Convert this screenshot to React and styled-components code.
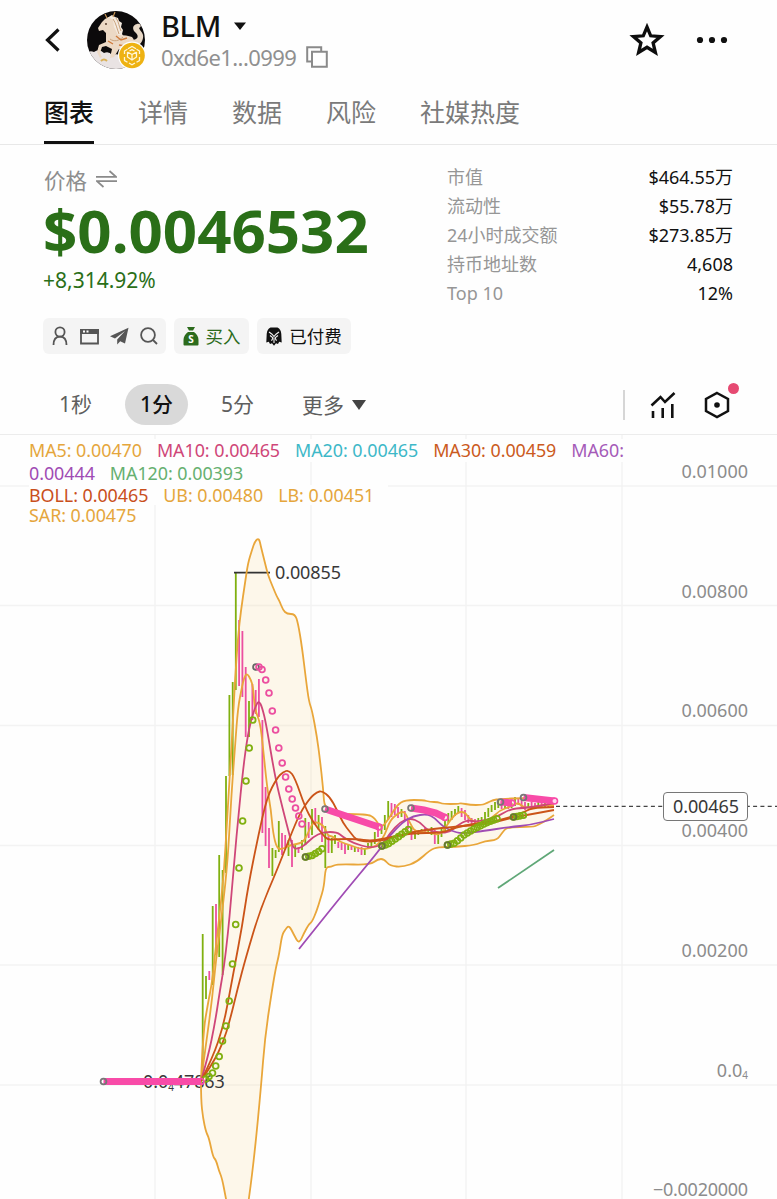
import { useState } from "react";
import styled, { createGlobalStyle } from "styled-components";

const UP = "#80b010";
const DOWN = "#ec4fa0";
const PINK = "#f84ba8";
const ORANGE = "#e9a63a";
const MAGENTA = "#cf4678";
const RED = "#cb5418";
const PURPLE = "#a04cb4";
const GREEN = "#5fa777";

const TABS = ["图表", "详情", "数据", "风险", "社媒热度"];

const STATS = [
  { label: "市值", value: "$464.55万" },
  { label: "流动性", value: "$55.78万" },
  { label: "24小时成交额", value: "$273.85万" },
  { label: "持币地址数", value: "4,608" },
  { label: "Top 10", value: "12%" },
];

const LEGEND = [
  [
    { text: "MA5: 0.00470", color: "#e5a63c" },
    { text: "MA10: 0.00465", color: "#cf4678" },
    { text: "MA20: 0.00465", color: "#3db8c8" },
    { text: "MA30: 0.00459", color: "#cb5a20" },
    { text: "MA60:", color: "#a55bb8" },
  ],
  [
    { text: "0.00444", color: "#a04cb4" },
    { text: "MA120: 0.00393", color: "#66b070" },
  ],
  [
    { text: "BOLL: 0.00465", color: "#c94f1c" },
    { text: "UB: 0.00480", color: "#e5a63c" },
    { text: "LB: 0.00451", color: "#e5a63c" },
  ],
  [{ text: "SAR: 0.00475", color: "#e5a63c" }],
];

const UPPER = [
  [201, 1081], [203, 1033], [208, 1003], [212, 983], [216, 945], [219, 920],
  [224, 873], [227, 820], [230, 773], [233, 720], [235, 680], [238, 637],
  [241, 610], [245, 583], [248, 563], [252, 550], [255, 541], [259, 538],
  [261, 547], [265, 563], [268, 575], [272, 585], [277, 597], [279, 600],
  [283, 610], [287, 614], [295, 614], [298, 623], [302, 647], [306, 680],
  [309, 702], [312, 710], [317, 737], [320, 760], [323, 787], [325, 814],
  [367, 814], [375, 818], [381, 829], [390, 817], [397, 805], [405, 800],
  [423, 800], [430, 802], [438, 802], [443, 804], [458, 804], [461, 803],
  [470, 805], [482, 805], [487, 803], [493, 800], [500, 799], [523, 798],
  [543, 799], [554, 801],
];

const LOWER = [
  [201, 1081], [201, 1100], [203, 1118], [206, 1132], [209, 1138], [213, 1157],
  [216, 1160], [219, 1171], [222, 1178], [226, 1199], [232, 1230], [244, 1230],
  [249, 1199], [255, 1150], [261, 1087], [265, 1037], [272, 990], [276, 967],
  [279, 955], [282, 935], [285, 930], [289, 925], [294, 935], [299, 944],
  [304, 933], [309, 924], [312, 922], [317, 910], [320, 900], [324, 887],
  [325.5, 867], [331, 867], [337, 864], [370, 865], [378, 859], [384, 859],
  [390, 866], [403, 867], [417, 862], [430, 850], [438, 847], [455, 847],
  [475, 845], [485, 841], [497, 840], [502, 833], [507, 827], [533, 827],
  [538, 825], [547, 820], [554, 815],
];

const MA5 = [
  [201, 1081], [207, 1037], [212, 1000], [216, 960], [220, 930], [227, 870],
  [230, 820], [232, 787], [235, 747], [238, 707], [242, 687], [244, 678],
  [247, 673], [251, 680], [253, 687], [254, 700], [256, 713], [260, 722],
  [263, 747], [267, 787], [271, 810], [273, 833], [277, 849], [283, 849],
  [290, 845], [303, 843], [308, 833], [313, 822], [320, 823], [325, 828],
  [328, 836], [332, 836], [340, 842], [350, 845], [363, 850], [377, 846],
  [385, 835], [390, 820], [400, 812], [405, 812], [410, 823], [415, 832],
  [428, 832], [437, 835], [443, 832], [450, 820], [458, 812], [465, 812],
  [470, 820], [480, 823], [490, 820], [500, 810], [510, 807], [518, 802],
  [525, 809], [543, 805], [554, 805],
];

const MA10 = [
  [201, 1081], [208, 1057], [215, 1023], [220, 990], [224, 967], [228, 933],
  [231, 900], [235, 853], [238, 820], [243, 770], [247, 740], [251, 720],
  [256, 705], [259, 701], [262, 707], [266, 723], [275, 777], [283, 810],
  [290, 837], [293, 848], [298, 849], [305, 845], [313, 837], [323, 832],
  [337, 832], [343, 837], [353, 843], [370, 848], [382, 845], [390, 833],
  [400, 822], [410, 818], [420, 822], [427, 830], [440, 833], [450, 832],
  [458, 825], [467, 820], [477, 822], [497, 817], [510, 809], [523, 808],
  [540, 806], [554, 803],
];

const MA20 = [
  [201, 1081], [213, 1057], [223, 1027], [229, 997], [235, 964], [242, 927],
  [248, 887], [258, 837], [267, 797], [277, 778], [283, 772], [289, 770],
  [295, 778], [305, 807], [313, 822], [323, 835], [328, 840], [337, 839],
  [357, 839], [370, 841], [383, 839], [410, 833], [443, 833], [453, 828],
  [477, 823], [497, 821], [523, 813], [531, 808], [554, 807],
];

const MA30 = [
  [201, 1081], [213, 1063], [223, 1043], [230, 1020], [238, 987], [246, 957],
  [260, 910], [277, 870], [290, 837], [300, 813], [310, 798], [317, 792],
  [322, 791], [330, 797], [337, 810], [343, 823], [350, 832], [358, 842],
  [382, 841], [397, 836], [417, 831], [450, 827], [490, 824], [510, 818],
  [527, 815], [554, 810],
];

const MA60 = [
  [299, 949], [338, 900], [378, 852], [390, 835], [403, 822], [413, 816],
  [427, 814], [435, 818], [443, 827], [457, 833], [467, 833], [483, 831],
  [510, 827], [530, 825], [554, 819],
];

const MA120 = [[498, 888], [554, 850]];

// x, top, bottom, 1 = up
const CANDLES = [
  [202.7, 934, 1080, 1], [206, 976, 999, 1], [209.3, 971, 980, 0],
  [212.7, 906, 985, 1], [216, 904, 955, 0], [219.2, 855, 957, 1],
  [222.6, 870, 975, 1], [226, 776, 873, 1], [229.4, 695, 776, 1],
  [232.7, 682, 775, 1], [235.8, 573, 690, 1], [239.1, 620, 686, 0],
  [242.4, 631, 697, 0], [245.7, 667, 737, 0], [249, 701, 737, 1],
  [252.4, 684, 720, 0], [255.7, 690, 714, 0], [258.9, 679, 717, 0],
  [262.4, 720, 833, 0], [265.6, 787, 846, 0], [269, 828, 868, 0],
  [272.4, 848, 876, 1], [275.6, 850, 858, 1], [278.8, 821, 852, 1],
  [282, 833, 855, 0], [285.2, 835, 850, 0], [288.5, 840, 856, 1],
  [292, 840, 867, 0], [295.2, 845, 857, 1], [298.5, 847, 853, 0],
  [302, 840, 850, 1], [305.3, 818, 845, 1], [308.7, 822, 838, 0],
  [312, 809, 835, 1], [315.3, 808, 825, 0], [318.6, 815, 830, 1],
  [322, 817, 842, 0], [325.3, 826, 868, 1], [328.5, 835, 853, 0],
  [331.8, 838, 853, 1], [335, 835, 844, 1], [338.3, 842, 848, 0],
  [341.6, 843, 850, 0], [345, 844, 854, 0], [348.2, 845, 850, 1],
  [351.5, 846, 850, 0], [354.8, 847, 852, 1], [358.2, 847, 852, 0],
  [361.5, 847, 855, 0], [364.8, 848, 855, 1], [368, 843, 849, 1],
  [371.4, 840, 847, 1], [374.8, 832, 844, 1], [378, 828, 837, 0],
  [381.5, 824, 834, 1], [384.8, 815, 830, 1], [388.2, 801, 820, 1],
  [391.5, 803, 817, 0], [394.8, 804, 815, 0], [398, 807, 818, 0],
  [401.5, 809, 817, 1], [404.8, 811, 820, 0], [408, 818, 829, 0],
  [411.5, 828, 840, 0], [415, 831, 839, 1], [418.3, 830, 835, 1],
  [421.6, 829, 834, 1], [425, 828, 833, 0], [428.2, 829, 834, 1],
  [431.5, 827, 835, 1], [434.8, 830, 844, 0], [438.2, 833, 844, 1],
  [441.5, 829, 837, 1], [445, 820, 832, 1], [448.3, 813, 823, 1],
  [451.6, 811, 820, 1], [455, 809, 816, 1], [458.3, 806, 813, 1],
  [461.6, 808, 817, 0], [465, 810, 820, 0], [468.3, 815, 823, 0],
  [471.6, 818, 825, 0], [475, 819, 826, 0], [478.3, 818, 823, 1],
  [481.6, 817, 822, 1], [485, 812, 820, 1], [488.3, 808, 817, 1],
  [491.6, 805, 812, 1], [495, 802, 810, 1], [498.3, 800, 808, 1],
  [501.6, 801, 809, 0], [505, 800, 808, 1], [508.3, 802, 809, 0],
  [511.6, 803, 808, 1], [515, 797, 806, 1], [518.3, 798, 805, 0],
  [521.6, 800, 808, 0], [525, 802, 810, 0], [528.3, 803, 808, 1],
  [531.6, 802, 809, 0], [535, 803, 808, 0], [538.3, 800, 807, 1],
  [541.6, 801, 808, 0], [545, 800, 807, 1], [548.3, 801, 807, 0],
  [551.6, 799, 806, 1],
];

const FALLING_DOTS = [
  [259, 667], [262, 669.5], [265.7, 680], [269, 693], [272.3, 711],
  [275.6, 730], [278.8, 748], [282.2, 763], [285.6, 777], [288.8, 789],
  [292.2, 799], [295.5, 808], [298.8, 816], [302, 824],
];

const RISING_DOTS = [
  [205.7, 1079], [209, 1076.5], [212.5, 1073], [215.7, 1066], [219.2, 1056.5],
  [222.5, 1041], [226, 1026], [229.2, 1001], [232.5, 964], [235.7, 924.5],
  [239, 868], [242.6, 821], [246, 781], [249.2, 748], [252.7, 720],
];

const UP_RUNS = [
  [[305.5, 857], [312, 855.5], [318, 852], [323, 848]],
  [[382, 846], [388, 844], [398, 837], [409, 829]],
  [[447.5, 845], [455, 843], [464, 835], [474, 829], [486, 823], [499, 818]],
  [[513.5, 817], [525, 815]],
];

const DOWN_RUNS = [
  [[325, 809], [379, 827]],
  [[411, 808], [424, 810], [436, 813], [445, 817.5]],
  [[500.5, 802], [512, 803]],
  [[523.5, 797.5], [554.5, 801]],
  [[103.5, 1081.5], [201, 1081.5]],
];

const GRID_Y = [486, 605.5, 725.5, 845.5, 965, 1085];
const GRID_X = [155, 311, 466, 622];

const AXIS = [
  ["0.01000", 478],
  ["0.00800", 598],
  ["0.00600", 717],
  ["0.00400", 837],
  ["0.00200", 957],
];

const toLine = (points) => points.map((p) => p.join(",")).join(" ");

// rounds the corners by running a quadratic through the midpoints
const toCurve = (points) => {
  let d = `M${points[0].join(" ")}`;
  for (let i = 1; i < points.length - 1; i++) {
    const [x, y] = points[i];
    const [nx, ny] = points[i + 1];
    d += `Q${x} ${y} ${(x + nx) / 2} ${(y + ny) / 2}`;
  }
  return d + `L${points[points.length - 1].join(" ")}`;
};

const spread = (points, step = 3.3) => {
  const dots = [];
  let carry = 0;
  for (let i = 1; i < points.length; i++) {
    const [x1, y1] = points[i - 1];
    const [x2, y2] = points[i];
    let x = x1 + carry;
    while (x <= x2) {
      dots.push([x, y1 + ((y2 - y1) * (x - x1)) / (x2 - x1)]);
      x += step;
    }
    carry = x - x2;
  }
  return dots;
};

const Dots = ({ points, color }) =>
  points.map(([x, y]) => (
    <circle key={x} cx={x} cy={y} r="2.9" fill="none" stroke={color} strokeWidth="1.8" />
  ));

const PriceChart = () => (
  <ChartSvg viewBox="0 435 777 764">
    {GRID_Y.map((y) => (
      <line key={y} x1="0" x2="777" y1={y} y2={y} stroke="#f3f3f3" strokeWidth="1.4" />
    ))}
    {GRID_X.map((x) => (
      <line key={x} x1={x} x2={x} y1="435" y2="1199" stroke="#f3f3f3" strokeWidth="1.4" />
    ))}

    <polygon
      points={toLine([...UPPER, ...[...LOWER].reverse()])}
      fill="#f9d58a"
      fillOpacity="0.17"
    />

    {CANDLES.map(([x, top, bottom, up]) => (
      <rect
        key={x}
        x={x - 0.9}
        y={top}
        width="1.8"
        height={bottom - top}
        fill={up ? UP : DOWN}
      />
    ))}

    <Label x="275" y="579">0.00855</Label>
    <line x1="234" x2="270" y1="572.7" y2="572.7" stroke="#333" strokeWidth="1.8" />
    <Label x="143" y="1088">
      0.0<tspan fontSize="10" dy="3">4</tspan>
      <tspan dy="-3">47863</tspan>
    </Label>

    <Curve d={toCurve(UPPER)} stroke={ORANGE} />
    <Curve d={toCurve(LOWER)} stroke={ORANGE} />
    <Curve d={toCurve(MA5)} stroke={ORANGE} />
    <Curve d={toCurve(MA10)} stroke={MAGENTA} />
    <Curve d={toCurve(MA60)} stroke={PURPLE} />
    <Curve d={toCurve(MA30)} stroke={RED} />
    <Curve d={toCurve(MA20)} stroke={RED} />
    <Curve d={toCurve(MA120)} stroke={GREEN} />

    <Dots points={RISING_DOTS} color={UP} />
    <Dots points={[[256, 667]]} color="#666" />
    <Dots points={FALLING_DOTS} color={DOWN} />
    {UP_RUNS.map((run) => (
      <g key={run[0][0]}>
        <Dots points={spread(run)} color={UP} />
        <Dots points={[run[0]]} color="#667733" />
      </g>
    ))}
    {DOWN_RUNS.map((run) => (
      <g key={run[0][0]}>
        <polyline points={toLine(run)} fill="none" stroke={PINK} strokeWidth="7" />
        <Dots points={[run[run.length - 1]]} color={PINK} />
        <Dots points={[run[0]]} color="#777" />
      </g>
    ))}
    <circle cx="554.5" cy="801" r="2" fill="#ffd9ef" />

    <line
      x1="556"
      x2="777"
      y1="806.4"
      y2="806.4"
      stroke="#444"
      strokeWidth="1.2"
      strokeDasharray="4 3.3"
    />
    {AXIS.map(([text, y]) => (
      <AxisLabel key={text} x="748" y={y}>
        {text}
      </AxisLabel>
    ))}
    <AxisLabel x="748" y="1077">
      0.0<tspan fontSize="10" dy="2">4</tspan>
    </AxisLabel>
    <AxisLabel x="748" y="1196" textLength="95">
      −0.0020000
    </AxisLabel>
    <rect x="663.5" y="792.5" width="84" height="28" rx="3.5" fill="#fefefe" stroke="#777" />
    <Label x="673" y="812.5">0.00465</Label>
  </ChartSvg>
);

const App = () => {
  const [tab, setTab] = useState("图表");
  const [interval, setInterval] = useState("1分");

  return (
    <>
      <GlobalStyle />
      <Page>
        <Header>
          <Icon $w={16} $h={26} viewBox="0 0 16 26">
            <path d="M14.5 2.5 3.500 13l11 10.500" fill="none" stroke="#111" strokeWidth="3.2" />
          </Icon>
          <Avatar>
            <HorseAvatar />
          </Avatar>
          <Token>
            <Name>
              BLM
              <Icon $w={12} $h={8} viewBox="0 0 12 8">
                <path d="M0 .5h12L6 8z" fill="#111" />
              </Icon>
            </Name>
            <Address>
              0xd6e1...0999
              <Icon $w={22} $h={22} viewBox="0 0 22 22">
                <path
                  d="M6 15.500H1.200V1.200h14v4.300M6 5.700h14.800v15H6z"
                  fill="none"
                  stroke="#8a8a8a"
                  strokeWidth="2"
                />
              </Icon>
            </Address>
          </Token>
          <Icon $w={36} $h={36} viewBox="0 0 36 36">
            <path
              d="M18 5l3.700 8.800 9.800.8-7.400 6.300 2.300 9.600-8.400-5.200-8.400 5.200 2.300-9.600-7.400-6.300 9.800-.8z"
              fill="none"
              stroke="#0d0d0d"
              strokeWidth="3.3"
            />
          </Icon>
          <Icon $w={32} $h={8} viewBox="0 0 32 8">
            <circle cx="4" cy="4" r="3.1" fill="#111" />
            <circle cx="16" cy="4" r="3.1" fill="#111" />
            <circle cx="28" cy="4" r="3.1" fill="#111" />
          </Icon>
        </Header>

        <Tabs>
          {TABS.map((name) => (
            <Tab key={name} $active={name === tab} onClick={() => setTab(name)}>
              {name}
            </Tab>
          ))}
        </Tabs>

        <Summary>
          <PriceColumn>
            <PriceLabel>
              价格
              <Icon $w={21} $h={18} viewBox="0 0 21 18">
                <path
                  d="M0 6.8h20L13.500 1M21 11.200H1L7.500 17"
                  fill="none"
                  stroke="#8a8a8a"
                  strokeWidth="1.7"
                />
              </Icon>
            </PriceLabel>
            <Price>$0.0046532</Price>
            <Change>+8,314.92%</Change>
            <Badges>
              <Badge $width={123} $gap={11}>
                <Icon $w={18} $h={20} viewBox="0 0 18 20">
                  <circle cx="9" cy="6" r="4.600" />
                  <path d="M2.500 19c0-5 1.500-8.400 6.500-8.400s6.500 3.400 6.500 8.400" />
                </Icon>
                <Icon $w={19} $h={17} viewBox="0 0 19 17">
                  <path d="M1 2h17v13.500H1z" />
                  <path d="M1 5V2h17v3z" fill="#555" />
                  <path d="M3 3.500h2M6.500 3.500h2" style={{ stroke: "#fff" }} />
                </Icon>
                <Icon $w={19} $h={18} viewBox="0 0 19 18">
                  <path
                    d="M18.500.8 0 9.300l5 2.200L15 4 7.200 12.500v5l3-3.300 4.800 2.300z"
                    fill="#555"
                    strokeWidth="0"
                  />
                </Icon>
                <Icon $w={18} $h={18} viewBox="0 0 18 18">
                  <circle cx="8" cy="8" r="6.900" />
                  <path d="M13 13l4 4" />
                </Icon>
              </Badge>
              <Badge $width={75} $gap={7} $color="#2c6b1c">
                <BagIcon />
                买入
              </Badge>
              <Badge $width={94} $gap={7} $color="#111">
                <EagleIcon />
                已付费
              </Badge>
            </Badges>
          </PriceColumn>
          <StatList>
            {STATS.map((stat) => (
              <Stat key={stat.label}>
                <span>{stat.label}</span>
                <StatValue>{stat.value}</StatValue>
              </Stat>
            ))}
          </StatList>
        </Summary>

        <Toolbar>
          {["1秒", "1分", "5分"].map((name) => (
            <Interval
              key={name}
              $active={name === interval}
              onClick={() => setInterval(name)}
            >
              {name}
            </Interval>
          ))}
          <More>
            更多
            <Icon $w={14} $h={10} viewBox="0 0 14 10">
              <path d="M0 0h14L7 10z" fill="#444" />
            </Icon>
          </More>
          <Divider />
          <Icon $w={26} $h={28} viewBox="0 0 26 28">
            <path
              d="M1.500 14.500l9-8.500 4.500 5L24.500 2M3 27v-7M12.700 27v-10M22.300 27V13"
              fill="none"
              stroke="#111"
              strokeWidth="2.600"
            />
          </Icon>
          <Settings>
            <Icon $w={26} $h={28} viewBox="0 0 26 28">
              <path
                d="M13 2l11 6v12l-11 6-11-6V8z"
                fill="none"
                stroke="#111"
                strokeWidth="2.500"
              />
              <circle cx="13" cy="14" r="2.800" fill="#111" />
            </Icon>
            <Notice />
          </Settings>
        </Toolbar>

        <ChartArea>
          <PriceChart />
          <Legend>
            {LEGEND.map((row, i) => (
              <LegendRow key={i} $height={i < 2 ? 23 : 20}>
                {row.map((item) => (
                  <LegendItem key={item.text} $color={item.color}>
                    {item.text}
                  </LegendItem>
                ))}
              </LegendRow>
            ))}
          </Legend>
        </ChartArea>
      </Page>
    </>
  );
};

const HorseAvatar = () => (
  <svg width="60" height="60" viewBox="0 0 60 60">
    <defs>
      <clipPath id="face">
        <circle cx="30" cy="30" r="29" />
      </clipPath>
    </defs>
    <g clipPath="url(#face)">
      <rect width="60" height="60" fill="#0c0a0b" />
      <path
        d="M0 44q3-4 8-2 5-4 10 1 5-2 8 2 6-2 10 1h24v14H0z"
        fill="#e9e3e3"
      />
      {/* tail */}
      <path
        d="M46 30c6 0 7-4 4-7-4-3-4-8 1-9 4-1 5 3 2 4 1 3 5 5 4 10-1 6-5 8-10 8z"
        fill="#e8d8c6"
      />
      {/* mane */}
      <path
        d="M21 8l5-3 3 2 3 1 1 3 3 2-1 4 2 3-1 4 2 3-4 4-9-4z"
        fill="#f4eadf"
      />
      {/* head, neck and body */}
      <path
        d="M19 9l4-2 4 3 1 7 4 8q9 0 14 2 4 4 2 12l-3 8-3-7-9-1-5 8-4 1 2-9-6-3-4 1-2 6 2 4-2 1-3-6 2-7 7-3v-9l-3-3-4 1-1-3 4-6z"
        fill="#ecd9c5"
      />
      <path
        d="M27 9c3 4 4 10 6 15M30 8c3 4 3 9 5 13M24 29c4 3 9 2 13-2"
        fill="none"
        stroke="#c9a27b"
        strokeWidth="1"
      />
      <path d="M21 8l-2-4M27 7l2-5" stroke="#c79455" strokeWidth="1.2" />
      <path
        d="M30 26l5 4 6-2M22 31l5 3M33 35l6 1"
        fill="none"
        stroke="#cf7b3c"
        strokeWidth="1.4"
      />
      <circle cx="20" cy="14" r=".9" fill="#4b3022" />
      <path d="M15 51q3-3 6 0" fill="none" stroke="#d9b056" strokeWidth="2" />
    </g>
    <circle cx="46" cy="45.500" r="14" fill="#fefefe" />
    <circle cx="46" cy="45.500" r="12.800" fill="#eeb212" />
    <path
      d="M42 38.800l4-2.300 4 2.300M38.500 44v-3l3-1.800M53.500 44v-3l-3-1.800M38.500 47v3.500l3 1.700M53.500 47v3.500l-3 1.700M43 53l3 1.700 3-1.700M41.500 42l4.500 2.600 4.500-2.600M41.500 42v5l4.500 3 4.500-3v-5M46 44.600v5.400M43.500 41l2.500-1.400 2.500 1.400"
      fill="none"
      stroke="#fff6d8"
      strokeWidth="1.3"
    />
  </svg>
);

const BagIcon = () => (
  <Icon $w={16} $h={19} viewBox="0 0 16 19">
    <path
      d="M4 0h8l-2 3.500H6zM5 5h6c3 2 4.500 5 4.500 8v4.500q0 1-1 1h-13q-1 0-1-1V13c0-3 1.500-6 4.500-8z"
      fill="#2c6b1c"
      strokeWidth="0"
    />
    <text x="8" y="15.500" textAnchor="middle" fontSize="10" fontWeight="700" fill="#fff">
      S
    </text>
  </Icon>
);

const EagleIcon = () => (
  <Icon $w={16} $h={19} viewBox="0 0 16 19">
    <path
      d="M4.500.5h7Q15 2 15.300 7l.4 8.500-2.500-.8-1.200 2.300-2-.8L8 18.800l-2-2.600-2 .8-1.200-2.300-2.500.8L.7 7Q1 2 4.500.5z"
      fill="#111"
      strokeWidth="0"
    />
    <path
      d="M3 5l3 2.200L8 9.500l2-2.300L13 5M4 8.500l3 2.300-1.500 3M12 8.500l-3 2.300 1.500 3M8 11.500v4.500"
      fill="none"
      style={{ stroke: "#f4f4f4" }}
      strokeWidth="1.100"
    />
  </Icon>
);

export default App;

const GlobalStyle = createGlobalStyle`
  body {
    margin: 0;
    background: #fefefe;
  }
  * {
    box-sizing: border-box;
  }
`;

const Page = styled.div`
  width: 777px;
  height: 1199px;
  display: flex;
  flex-direction: column;
  overflow: hidden;
  font-family: "Noto Sans", "Noto Sans CJK SC", sans-serif;
  color: #111;
`;

const Icon = styled.svg`
  display: block;
  flex: none;
  width: ${(props) => props.$w}px;
  height: ${(props) => props.$h}px;
`;

const Header = styled.header`
  display: flex;
  align-items: center;
  height: 80px;
  padding: 0 49px 0 44px;

  & > svg:last-child {
    margin-left: 31px;
  }
`;

const Avatar = styled.div`
  width: 60px;
  height: 60px;
  margin-left: 26px;
`;

const Token = styled.div`
  flex: 1;
  margin-left: 15px;
  padding-top: 3px;
`;

const Name = styled.div`
  display: flex;
  align-items: center;
  gap: 13px;
  height: 31px;
  font-size: 29px;
  font-weight: 500;
  letter-spacing: -0.4px;
  line-height: 31px;
`;

const Address = styled.div`
  display: flex;
  align-items: center;
  gap: 10px;
  height: 32px;
  font-size: 22px;
  letter-spacing: -0.6px;
  color: #909090;
`;

const Tabs = styled.nav`
  display: flex;
  gap: 44px;
  height: 65px;
  padding-left: 44px;
  border-bottom: 1px solid #e8e8e8;
`;

const Tab = styled.button`
  height: 64px;
  padding: 0;
  border: 0;
  border-bottom: 3px solid ${(props) => (props.$active ? "#111" : "transparent")};
  background: none;
  font-family: inherit;
  font-size: 25px;
  font-weight: ${(props) => (props.$active ? 500 : 400)};
  color: ${(props) => (props.$active ? "#111" : "#7a7a7a")};
`;

const Summary = styled.section`
  display: flex;
  justify-content: space-between;
  height: 230px;
  padding: 17px 43px 0 43px;
`;

const PriceColumn = styled.div`
  display: flex;
  flex-direction: column;
`;

const PriceLabel = styled.div`
  display: flex;
  align-items: center;
  gap: 9px;
  height: 34px;
  padding-left: 1px;
  font-size: 21.5px;
  color: #8e8e8e;
`;

const Price = styled.div`
  height: 70px;
  font-size: 60px;
  font-weight: 700;
  line-height: 69px;
  color: #2a6f18;
`;

const Change = styled.div`
  height: 28px;
  font-size: 21px;
  line-height: 28px;
  color: #2a6f18;
`;

const Badges = styled.div`
  display: flex;
  gap: 8px;
  margin-top: 24px;
`;

const Badge = styled.div`
  display: flex;
  align-items: center;
  justify-content: center;
  gap: ${(props) => props.$gap}px;
  width: ${(props) => props.$width}px;
  height: 36px;
  border-radius: 6px;
  background: #f4f4f4;
  font-size: 17.5px;
  line-height: 32px;
  color: ${(props) => props.$color || "#555"};
  fill: none;
  stroke-width: 1.8;

  svg {
    stroke: #555;
  }
  svg text {
    stroke: none;
  }
`;

const StatList = styled.div`
  width: 287px;
`;

const Stat = styled.div`
  display: flex;
  justify-content: space-between;
  height: 29px;
  padding-right: 1px;
  font-size: 18px;
  line-height: 30px;
  color: #969696;
`;

const StatValue = styled.span`
  color: #111;
`;

const Toolbar = styled.div`
  display: flex;
  align-items: center;
  height: 60px;
  padding: 0 47px 0 44px;
  border-bottom: 1px solid #ececec;
`;

const Interval = styled.button`
  width: 63px;
  height: 41px;
  margin-right: 18px;
  padding: 0 0 3px;
  border: 0;
  border-radius: 21px;
  background: ${(props) => (props.$active ? "#d9d9d9" : "none")};
  font-family: inherit;
  font-size: 21px;
  font-weight: ${(props) => (props.$active ? 500 : 400)};
  color: ${(props) => (props.$active ? "#111" : "#5e5e5e")};
`;

const More = styled.div`
  display: flex;
  flex: 1;
  align-items: center;
  gap: 8px;
  padding-left: 15px;
  font-size: 21px;
  line-height: 30px;
  color: #5e5e5e;
`;

const Divider = styled.div`
  width: 2px;
  height: 30px;
  margin-right: 25px;
  background: #d6d6d6;
`;

const Settings = styled.div`
  position: relative;
  margin-left: 28px;
`;

const Notice = styled.span`
  position: absolute;
  top: -8px;
  right: -9px;
  width: 11px;
  height: 11px;
  border-radius: 50%;
  background: #e64a72;
`;

const ChartArea = styled.div`
  position: relative;
  height: 764px;
`;

const ChartSvg = styled.svg`
  display: block;
  width: 777px;
  height: 764px;
`;

const Curve = styled.path`
  fill: none;
  stroke-width: 1.8;
`;

const Label = styled.text`
  font-size: 18px;
  letter-spacing: -0.1px;
  fill: #383838;
`;

const AxisLabel = styled.text`
  font-size: 18px;
  text-anchor: end;
  fill: #8c8c8c;
`;

const Legend = styled.div`
  position: absolute;
  top: 4px;
  left: 29px;
`;

const LegendRow = styled.div`
  display: flex;
  gap: 15px;
  width: fit-content;
  height: ${(props) => props.$height}px;
  padding-right: 14px;
  background: #fefefe;
  line-height: ${(props) => props.$height}px;
`;

const LegendItem = styled.span`
  font-size: 17.9px;
  letter-spacing: -0.05px;
  color: ${(props) => props.$color};
`;
